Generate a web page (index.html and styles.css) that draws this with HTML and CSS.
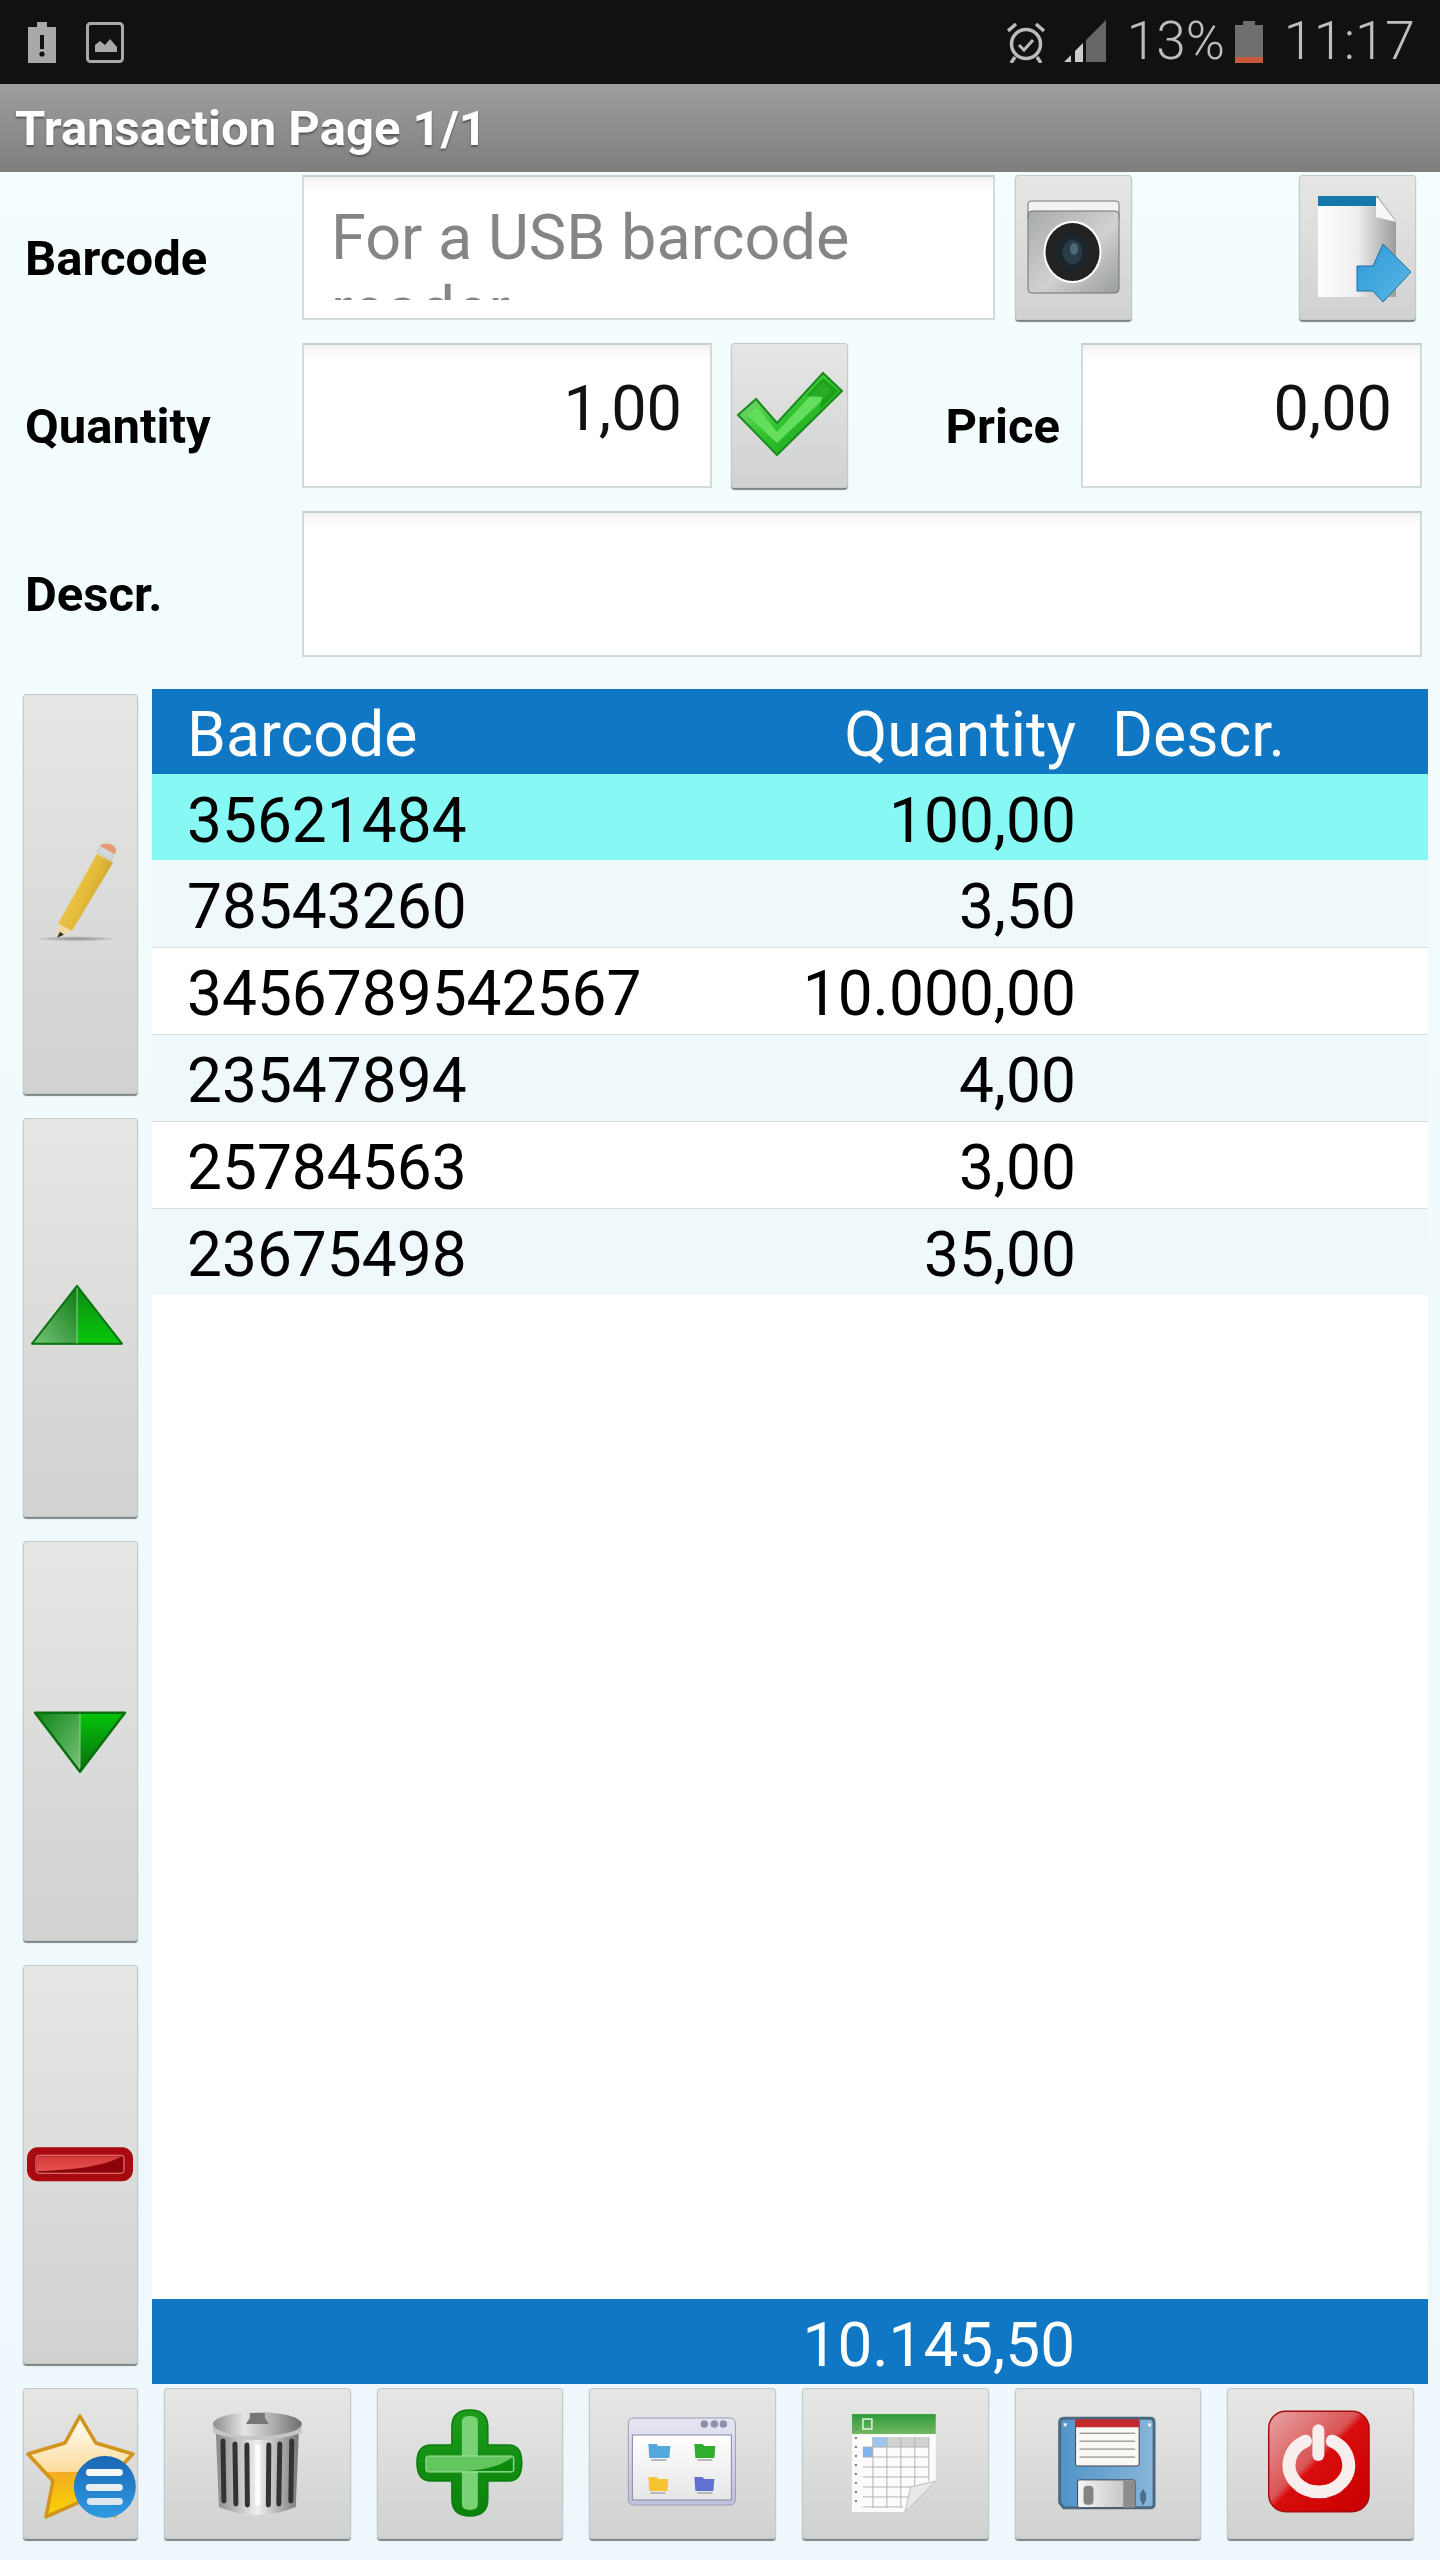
FILE: index.html
```html
<!DOCTYPE html>
<html lang="en">
<head>
  <meta charset="UTF-8">
  <title>Transaction Page 1/1</title>
  <link rel="stylesheet" href="styles.css">
</head>
<body>

  <!-- status bar -->
  <div class="status-bar">
    <div class="status-left">
      <svg class="status-icon alert-icon" viewBox="28 22 28 41">
        <path fill="#a9a9a9" d="M28 27h9v-5h10v5h9v36H28z"/>
        <rect x="40" y="35" width="4" height="14" fill="#111"/>
        <circle cx="42" cy="54" r="2.6" fill="#111"/>
      </svg>
      <svg class="status-icon picture-icon" viewBox="86 22 38 41">
        <rect x="87.5" y="23.5" width="35" height="38" rx="3" fill="none" stroke="#a9a9a9" stroke-width="3"/>
        <path fill="#a9a9a9" d="M95 52v-7l5-4 5 4 5-6 7 8v5z"/>
      </svg>
    </div>
    <div class="status-right">
      <svg class="status-icon alarm-icon" viewBox="1007 22 38 41">
        <circle cx="1026" cy="44" r="14.5" fill="none" stroke="#bbb" stroke-width="3.5"/>
        <path d="M1019 45l5 5 9-10" fill="none" stroke="#bbb" stroke-width="3"/>
        <path d="M1008 31l8-7M1044 31l-8-7M1015 57l-4 6M1037 57l4 6" fill="none" stroke="#bbb" stroke-width="3.5"/>
      </svg>
      <svg class="status-icon signal-icon" viewBox="1066 20 42 42">
        <path fill="#666" d="M1108 20v42h-20V40z"/>
        <path fill="#ccc" d="M1066 62l7-7v7zM1077 51l8-8v19h-8z"/>
      </svg>
      <span class="status-pct">13%</span>
      <svg class="status-icon battery-icon" viewBox="1236 21 28 42">
        <path fill="#6e6e6e" d="M1236 25h8v-4h12v4h8v32h-28z"/>
        <rect x="1236" y="57" width="28" height="6" fill="#c8583a"/>
      </svg>
      <span class="status-time">11:17</span>
    </div>
  </div>

  <div class="title-bar">Transaction Page 1/1</div>

  <!-- entry form -->
  <div class="form">
    <div class="form-row">
      <div class="label">Barcode</div>
      <div class="field field-barcode">
        <div class="placeholder">For a USB barcode reader</div>
      </div>
      <div class="btn btn-form btn-camera">
        <svg viewBox="1015 176 117 145">
          <defs>
            <linearGradient id="camBody" x1="0" y1="0" x2="1" y2="1">
              <stop offset="0" stop-color="#a8abab"/><stop offset="0.55" stop-color="#d0d1d1"/><stop offset="1" stop-color="#9a9d9d"/>
            </linearGradient>
          </defs>
          <rect x="1028" y="202" width="91" height="20" rx="3" fill="#f3f3f1" stroke="#777"/>
          <rect x="1028" y="212" width="91" height="82" rx="4" fill="url(#camBody)" stroke="#6f7272"/>
          <ellipse cx="1072.5" cy="253" rx="29" ry="31" fill="#fff"/>
          <ellipse cx="1072.5" cy="253" rx="27" ry="29" fill="#222"/>
          <ellipse cx="1072.5" cy="253" rx="17" ry="19" fill="#1c252b"/>
          <ellipse cx="1072.5" cy="253" rx="10" ry="12" fill="#2a3c46"/>
          <ellipse cx="1074" cy="250" rx="4" ry="6" fill="#4f6a77"/>
        </svg>
      </div>
      <div class="btn btn-form btn-export">
        <svg viewBox="1299 176 117 145">
          <defs>
            <linearGradient id="docBody" x1="0" y1="0" x2="1" y2="0">
              <stop offset="0" stop-color="#fff"/><stop offset="0.5" stop-color="#eee"/><stop offset="1" stop-color="#9c9c9c"/>
            </linearGradient>
            <linearGradient id="arrowBlue" x1="0" y1="0" x2="1" y2="1">
              <stop offset="0" stop-color="#2b97d6"/><stop offset="1" stop-color="#5cb9e6"/>
            </linearGradient>
          </defs>
          <path fill="url(#docBody)" d="M1318 197h60l18 25v76h-78z"/>
          <path fill="#1478ad" d="M1318 197h60v10h-60z"/>
          <path fill="#f8f8f8" d="M1376 197l20 26-20-5z"/>
          <path fill="url(#arrowBlue)" stroke="#1f6f9c" d="M1357 267h16l10-22 28 28-28 30-10-11h-16z"/>
        </svg>
      </div>
    </div>

    <div class="form-row">
      <div class="label">Quantity</div>
      <div class="field field-qty">1,00</div>
      <div class="btn btn-form btn-check">
        <svg viewBox="731 343 117 145">
          <defs>
            <linearGradient id="checkGreen" x1="0" y1="0" x2="1" y2="1">
              <stop offset="0" stop-color="#9fdc92"/><stop offset="0.5" stop-color="#31c42f"/><stop offset="1" stop-color="#119111"/>
            </linearGradient>
          </defs>
          <path fill="url(#checkGreen)" stroke="#1b8a1f" stroke-width="2" d="M738 415l18-16 21 24 46-50 19 18-65 64z"/>
          <path fill="#63de5d" d="M747 415l10-8 20 25 46-50 9 9-55 52z"/>
          <path fill="#12940f" d="M823 378l15 13-18 18 2-12-16-1z" opacity="0.7"/>
        </svg>
      </div>
      <div class="label label-price">Price</div>
      <div class="field field-price">0,00</div>
    </div>

    <div class="form-row form-row-tall">
      <div class="label">Descr.</div>
      <div class="field field-descr"></div>
    </div>
  </div>

  <!-- list with side buttons -->
  <div class="main">
    <div class="side">
      <div class="btn">
        <svg viewBox="23 695 115 398">
          <defs>
            <linearGradient id="pencilBody" x1="0" y1="0" x2="1" y2="0.6">
              <stop offset="0" stop-color="#f2d060"/><stop offset="0.6" stop-color="#e5bb3a"/><stop offset="1" stop-color="#c2942a"/>
            </linearGradient>
            <radialGradient id="pencilShadow">
              <stop offset="0" stop-color="#8e9090"/><stop offset="1" stop-color="#cfd1d0"/>
            </radialGradient>
          </defs>
          <ellipse cx="76" cy="939" rx="38" ry="2.5" fill="url(#pencilShadow)"/>
          <path fill="url(#pencilBody)" d="M97 854l16 9-41 68-14-7z"/>
          <path fill="#f1d9a6" d="M58 924l14 7-15 7z"/>
          <path fill="#333" d="M60 932l-3 6 7-3z"/>
          <path fill="#d4d8da" stroke="#9aa" stroke-width="0.5" d="M97 852l5-6 12 7-3 8z"/>
          <path fill="#e69a75" d="M100 846q4-4 12-1 5 3 4 8l-2 1z"/>
        </svg>
      </div>
      <div class="btn">
        <svg viewBox="23 1118 115 400">
          <defs>
            <linearGradient id="upLeft" x1="0" y1="1" x2="1" y2="0">
              <stop offset="0" stop-color="#7cc67d"/><stop offset="1" stop-color="#0a7a10"/>
            </linearGradient>
            <linearGradient id="upRight" x1="0" y1="0" x2="0" y2="1">
              <stop offset="0" stop-color="#0e8912"/><stop offset="1" stop-color="#07c90b"/>
            </linearGradient>
          </defs>
          <path fill="url(#upLeft)" d="M31 1344l46-58v59H33z"/>
          <path fill="url(#upRight)" d="M77 1286l45 58-2 1H77z"/>
          <path fill="none" stroke="#0c7312" stroke-width="2" stroke-linejoin="round" d="M32 1344l45-58 45 58z"/>
          <path stroke="#8fd28f" d="M77 1288v56"/>
        </svg>
      </div>
      <div class="btn">
        <svg viewBox="23 1541 115 400">
          <defs>
            <linearGradient id="downLeft" x1="0" y1="0" x2="1" y2="1">
              <stop offset="0" stop-color="#0d8512"/><stop offset="1" stop-color="#7cc47d"/>
            </linearGradient>
            <linearGradient id="downRight" x1="0" y1="0" x2="0" y2="1">
              <stop offset="0" stop-color="#05c409"/><stop offset="1" stop-color="#0a6b10"/>
            </linearGradient>
          </defs>
          <path fill="url(#downLeft)" d="M35 1713h45v59z"/>
          <path fill="url(#downRight)" d="M80 1713h45l-45 59z"/>
          <path fill="none" stroke="#0a6f10" stroke-width="2.5" stroke-linejoin="round" d="M35 1713h90l-45 59z"/>
          <path stroke="#8fd28f" d="M80 1714v54"/>
        </svg>
      </div>
      <div class="btn">
        <svg viewBox="23 1966 115 399">
          <defs>
            <linearGradient id="minusGloss" x1="0" y1="0" x2="0" y2="1">
              <stop offset="0" stop-color="#d63a3a"/><stop offset="1" stop-color="#e65050"/>
            </linearGradient>
          </defs>
          <rect x="27" y="2148" width="106" height="34" rx="11" fill="#a80a10"/>
          <rect x="36" y="2156" width="88" height="18" rx="3" fill="#8c0408" stroke="#e88" stroke-width="1"/>
          <path fill="url(#minusGloss)" d="M37 2157h85q-22 13-85 15z"/>
        </svg>
      </div>
    </div>

    <div class="list">
      <table class="grid">
        <thead>
          <tr><th class="col-code">Barcode</th><th class="col-qty">Quantity</th><th class="col-descr">Descr.</th></tr>
        </thead>
        <tbody>
          <tr class="selected"><td class="col-code">35621484</td><td class="col-qty">100,00</td><td class="col-descr"></td></tr>
          <tr class="alt"><td class="col-code">78543260</td><td class="col-qty">3,50</td><td class="col-descr"></td></tr>
          <tr><td class="col-code">3456789542567</td><td class="col-qty">10.000,00</td><td class="col-descr"></td></tr>
          <tr class="alt"><td class="col-code">23547894</td><td class="col-qty">4,00</td><td class="col-descr"></td></tr>
          <tr><td class="col-code">25784563</td><td class="col-qty">3,00</td><td class="col-descr"></td></tr>
          <tr class="alt last"><td class="col-code">23675498</td><td class="col-qty">35,00</td><td class="col-descr"></td></tr>
        </tbody>
      </table>
      <div class="list-fill"></div>
      <div class="total">10.145,50</div>
    </div>
  </div>

  <!-- bottom toolbar -->
  <div class="toolbar">
    <div class="btn btn-star">
      <svg viewBox="23 2389 115 151">
        <defs>
          <linearGradient id="starFill" x1="0" y1="0" x2="0" y2="1">
            <stop offset="0" stop-color="#fffefa"/><stop offset="0.55" stop-color="#fbdc9c"/><stop offset="0.56" stop-color="#f3ad22"/><stop offset="1" stop-color="#f7d500"/>
          </linearGradient>
          <linearGradient id="ballBlue" x1="0" y1="0" x2="0" y2="1">
            <stop offset="0" stop-color="#1a67b5"/><stop offset="1" stop-color="#2f9be3"/>
          </linearGradient>
        </defs>
        <path fill="url(#starFill)" stroke="#d2941c" stroke-width="3.5" stroke-linejoin="round" d="M80 2417l16 27 37 11-25 27 7 35-35-14-34 15 7-36-25-27 37-11z"/>
        <ellipse cx="105" cy="2488" rx="31" ry="31" fill="url(#ballBlue)"/>
        <rect x="86" y="2470" width="37" height="7" rx="3.5" fill="#f4f6f8"/>
        <rect x="86" y="2485" width="37" height="7" rx="3.5" fill="#e9eef2"/>
        <rect x="87" y="2499" width="36" height="7" rx="3.5" fill="#dce6ee"/>
      </svg>
    </div>
    <div class="btn btn-wide">
      <svg viewBox="164 2389 187 151">
        <defs>
          <linearGradient id="canBody" x1="0" y1="0" x2="1" y2="0">
            <stop offset="0" stop-color="#8a8a8a"/><stop offset="0.5" stop-color="#f0f0f0"/><stop offset="1" stop-color="#777"/>
          </linearGradient>
          <linearGradient id="canLid" x1="0" y1="0" x2="1" y2="0">
            <stop offset="0" stop-color="#8c8c8c"/><stop offset="0.35" stop-color="#e5e5e5"/><stop offset="0.7" stop-color="#aaa"/><stop offset="1" stop-color="#6c6c6c"/>
          </linearGradient>
        </defs>
        <path fill="url(#canBody)" d="M216 2434h83l-3 74q-38 16-77 0z"/>
        <g stroke="#333" stroke-width="5" stroke-linecap="round">
          <path d="M223 2442l1 60M235 2445l1 60M247 2446l.5 60M269 2446l-.5 60M280 2445l-1 60M292 2442l-1 60"/>
        </g>
        <path d="M258 2446v60" stroke="#fff" stroke-width="5"/>
        <path fill="#c5c5c5" d="M213 2426h89v8q-44 14-89 0z"/>
        <ellipse cx="257.5" cy="2425" rx="44.5" ry="12" fill="url(#canLid)"/>
        <path fill="#777" d="M250 2414h15v5l4 6h-23l4-6z"/>
      </svg>
    </div>
    <div class="btn btn-wide">
      <svg viewBox="376 2389 187 151">
        <defs>
          <linearGradient id="plusFill" x1="0" y1="0" x2="0" y2="1">
            <stop offset="0" stop-color="#1c9c1c"/><stop offset="1" stop-color="#0a820a"/>
          </linearGradient>
        </defs>
        <path fill="url(#plusFill)" stroke="#0d7d10" stroke-width="1.5" d="M451 2428q0-17 18-17t18 17v18h21q13 0 13 18t-13 18h-21v18q0 17-18 17t-18-17v-18h-21q-14 0-14-18t14-18h21z"/>
        <path fill="#7ad276" d="M461 2422q0-5 8-5t8 5v83q0 6-8 6t-8-6z"/>
        <rect x="425" y="2457" width="88" height="16" rx="2" fill="#62c55e" stroke="#a8e0a0"/>
        <path fill="#0c8a0e" d="M512 2458v14h-46q30-2 46-14z"/>
      </svg>
    </div>
    <div class="btn btn-wide">
      <svg viewBox="590 2389 186 151">
        <defs>
          <linearGradient id="winBar" x1="0" y1="0" x2="0" y2="1">
            <stop offset="0" stop-color="#e6e6f2"/><stop offset="1" stop-color="#c0c1dc"/>
          </linearGradient>
          <linearGradient id="winFill" x1="0" y1="0" x2="0" y2="1">
            <stop offset="0" stop-color="#fff"/><stop offset="1" stop-color="#e6e6e6"/>
          </linearGradient>
        </defs>
        <rect x="629" y="2419" width="107" height="87" rx="5" fill="url(#winBar)" stroke="#9a9bb8"/>
        <rect x="633" y="2436" width="99" height="65" fill="url(#winFill)" stroke="#8486a8"/>
        <circle cx="705" cy="2425" r="3.8" fill="#8f91ac"/>
        <circle cx="715" cy="2425" r="3.8" fill="#8f91ac"/>
        <circle cx="724" cy="2425" r="3.8" fill="#8f91ac"/>
        <path fill="#55a8de" d="M649 2445h8l2 2h12l-1 12h-20z"/>
        <path fill="#2fae2b" d="M695 2445h8l2 2h11l-1 12h-19z"/>
        <path fill="#f6c332" d="M649 2478h8l2 2h10l-1 12h-18z"/>
        <path fill="#6270d0" d="M695 2478h8l2 2h10l-1 12h-18z"/>
        <path stroke="#b8b8b8" stroke-width="2" d="M652 2461h15M698 2461h15M651 2494h15M698 2494h15"/>
      </svg>
    </div>
    <div class="btn btn-wide">
      <svg viewBox="803 2389 187 151">
        <defs>
          <linearGradient id="sheetHead" x1="0" y1="0" x2="0" y2="1">
            <stop offset="0" stop-color="#2f9a3c"/><stop offset="1" stop-color="#73b860"/>
          </linearGradient>
        </defs>
        <path fill="#fbfbfb" d="M853 2415h84v67l-31 31h-53z"/>
        <rect x="853" y="2415" width="84" height="20" fill="url(#sheetHead)"/>
        <rect x="864" y="2420" width="9" height="10" fill="none" stroke="#e6f4e0" stroke-width="1.5"/>
        <rect x="864" y="2438" width="66" height="10" fill="#d0d2d2"/>
        <rect x="864" y="2438" width="10" height="10" fill="#fff"/>
        <rect x="874" y="2438" width="14" height="10" fill="#9cc6f0"/>
        <rect x="864" y="2448" width="10" height="10" fill="#7fb4ec"/>
        <path fill="none" stroke="#b2b4b4" d="M864 2448h66M864 2458h66M864 2468h66M864 2478h66M864 2488h58M864 2498h46M864 2508h40M874 2438v71M888 2438v71M902 2438v71M916 2438v52M930 2438v44"/>
        <path fill="#e9e9e9" stroke="#bdbdbd" d="M937 2482l-31 31 6-25z"/>
        <path stroke="#777" stroke-width="2" stroke-dasharray="2 7" d="M857 2420v90"/>
      </svg>
    </div>
    <div class="btn btn-wide">
      <svg viewBox="1015 2389 188 151">
        <defs>
          <linearGradient id="diskBody" x1="0" y1="0" x2="1" y2="0">
            <stop offset="0" stop-color="#4f94c9"/><stop offset="1" stop-color="#87b6d9"/>
          </linearGradient>
          <linearGradient id="shutter" x1="0" y1="0" x2="1" y2="0">
            <stop offset="0" stop-color="#f6f6f6"/><stop offset="1" stop-color="#bcbcbc"/>
          </linearGradient>
        </defs>
        <path fill="url(#diskBody)" stroke="#4b6a80" stroke-width="3" d="M1065 2419h86q4 0 4 4v83q0 3-4 3h-87l-4-5v-81q0-4 5-4z"/>
        <rect x="1076" y="2420" width="64" height="47" rx="2" fill="#fbf9f4" stroke="#445"/>
        <rect x="1076" y="2420" width="64" height="8" fill="#c32a2e"/>
        <path stroke="#777" d="M1080 2434h56M1080 2442h56M1080 2450h56M1080 2458h56"/>
        <rect x="1078" y="2481" width="58" height="28" rx="2" fill="url(#shutter)" stroke="#445"/>
        <rect x="1124" y="2482" width="12" height="27" fill="#8d8d8d"/>
        <rect x="1084" y="2487" width="10" height="19" rx="4" fill="#848484"/>
        <path fill="#4a6f8c" d="M1144 2490l3 5v6l-3 6-3-6v-6z"/>
        <rect x="1064" y="2424" width="3" height="3" fill="#e8f2fa"/>
        <rect x="1149" y="2424" width="3" height="3" fill="#e8f2fa"/>
      </svg>
    </div>
    <div class="btn btn-wide">
      <svg viewBox="1228 2389 188 151">
        <defs>
          <linearGradient id="powerFill" x1="0" y1="0" x2="1" y2="1">
            <stop offset="0" stop-color="#e9a5a5"/><stop offset="0.45" stop-color="#d95454"/><stop offset="0.5" stop-color="#d80c0c"/><stop offset="1" stop-color="#c90000"/>
          </linearGradient>
        </defs>
        <rect x="1270" y="2412" width="101" height="101" rx="17" fill="url(#powerFill)" stroke="#a50d0d" stroke-width="1.5"/>
        <path fill="none" stroke="#f8eeee" stroke-width="13" stroke-linecap="round" d="M1307 2442a30 27 0 1 0 27 0"/>
        <path stroke="#f8eeee" stroke-width="12" stroke-linecap="round" d="M1320 2431v25"/>
      </svg>
    </div>
  </div>

</body>
</html>
```

FILE: styles.css
```css
body {
  margin: 0;
  width: 1440px;
  height: 2560px;
  overflow: hidden;
  font-family: Roboto, sans-serif;
  background: linear-gradient(#f4fefe, #eef8fc);
  display: flex;
  flex-direction: column;
}

svg {
  display: block;
}

/* status bar */
.status-bar {
  height: 84px;
  background: #111;
  display: flex;
  justify-content: space-between;
  flex-shrink: 0;
}

.status-left, .status-right {
  display: flex;
  align-items: flex-start;
}

.status-left {
  padding-left: 28px;
  gap: 30px;
}

.status-right {
  padding-right: 25px;
  color: #bdbdbd;
  font-weight: 300;
  font-size: 53px;
  line-height: 84px;
}

.status-icon {
  margin-top: 22px;
  height: 41px;
}

.alert-icon { width: 28px; }
.picture-icon { width: 38px; }
.alarm-icon { width: 38px; margin-right: 19px; }
.signal-icon { width: 42px; height: 42px; margin-top: 20px; margin-right: 21px; }
.battery-icon { width: 28px; height: 42px; margin-top: 21px; margin-left: 10px; margin-right: 21px; }

.status-pct, .status-time {
  margin-top: -1px;
}

.status-time {
  font-size: 54px;
}

/* title */
.title-bar {
  height: 88px;
  flex-shrink: 0;
  box-sizing: border-box;
  padding-left: 15px;
  background: linear-gradient(#9e9f9c, #7e7e7e);
  color: #fff;
  font-size: 49px;
  font-weight: bold;
  line-height: 90px;
  text-shadow: 0 2px 2px #555;
}

/* form */
.form {
  padding-top: 3px;
  display: flex;
  flex-direction: column;
  gap: 23px;
}

.form-row {
  display: flex;
  align-items: stretch;
  height: 145px;
}

.form-row-tall {
  height: 146px;
}

.label {
  width: 302px;
  box-sizing: border-box;
  padding-left: 25px;
  padding-top: 52px;
  font-size: 49px;
  font-weight: bold;
  line-height: 64px;
  color: #000;
  flex-shrink: 0;
}

.label-price {
  width: 233px;
  padding-left: 0;
  padding-right: 21px;
  text-align: right;
}

.field {
  box-sizing: border-box;
  height: 100%;
  background: #fff;
  border: 2px solid #d3dbda;
  border-top-color: #c6cecc;
  box-shadow: inset 0 14px 14px -10px #ececec;
  font-size: 63px;
  line-height: 76px;
  color: #111;
  text-align: right;
  padding: 26px 28px 0 0;
}

.field-barcode {
  width: 693px;
  padding: 25px 27px 0 27px;
  text-align: left;
  line-height: 72px;
}

.placeholder {
  height: 98px;
  overflow: hidden;
  color: #858585;
}

.field-qty { width: 410px; }
.field-price { width: 341px; }
.field-descr { width: 1120px; }

/* buttons */
.btn {
  box-sizing: border-box;
  background: linear-gradient(#e6e7e5, #d0d2d1);
  border-radius: 4px;
  box-shadow: inset 0 0 0 1px #c3c9c9, 0 2px 1px #7f8585;
  overflow: hidden;
}

.btn svg {
  width: 100%;
  height: 100%;
}

.btn-form {
  width: 117px;
  flex-shrink: 0;
}

.btn-camera { margin-left: 20px; }
.btn-export { margin-left: 167px; }
.btn-check { margin-left: 19px; }

/* list area */
.main {
  margin-top: 32px;
  height: 1695px;
  display: flex;
  flex-shrink: 0;
}

.side {
  width: 115px;
  margin-left: 23px;
  margin-right: 14px;
  padding: 5px 0 20px;
  display: flex;
  flex-direction: column;
  gap: 24px;
  flex-shrink: 0;
}

.side .btn {
  flex: 1;
}

.list {
  width: 1276px;
  background: #fff;
  display: flex;
  flex-direction: column;
}

.list-fill {
  flex: 1;
}

.grid {
  width: 100%;
  border-collapse: collapse;
  table-layout: fixed;
  font-size: 62.2px;
  color: #000;
}

.grid th, .grid td {
  padding: 7px 0 0;
  font-weight: normal;
  text-align: left;
  box-sizing: border-box;
  height: 87px;
  line-height: 72px;
  border-bottom: 1px solid #d8dfe0;
}

.grid th {
  height: 85px;
  background: #0f77c4;
  color: #fff;
  font-size: 62.5px;
  padding-top: 6px;
  border-bottom: none;
}

.grid .selected td {
  height: 86px;
}

.grid .col-code {
  width: 560px;
  padding-left: 35px;
}

.grid .col-qty {
  width: 364px;
  text-align: right;
}

.grid .col-descr {
  padding-left: 36px;
}

.grid .selected td {
  background: #88f8f4;
  border-bottom: none;
}

.grid .alt td {
  background: #eff8fa;
}

.grid .last td {
  border-bottom: none;
}

.total {
  height: 85px;
  flex-shrink: 0;
  background: #0f77c4;
  color: #fff;
  font-size: 62px;
  line-height: 91px;
  text-align: right;
  padding-right: 353px;
}

/* toolbar */
.toolbar {
  margin-top: 4px;
  height: 151px;
  display: flex;
  padding-left: 23px;
  flex-shrink: 0;
}

.btn-star {
  width: 115px;
  margin-right: 26px;
}

.btn-wide {
  width: 187px;
  margin-right: 26px;
}
```
